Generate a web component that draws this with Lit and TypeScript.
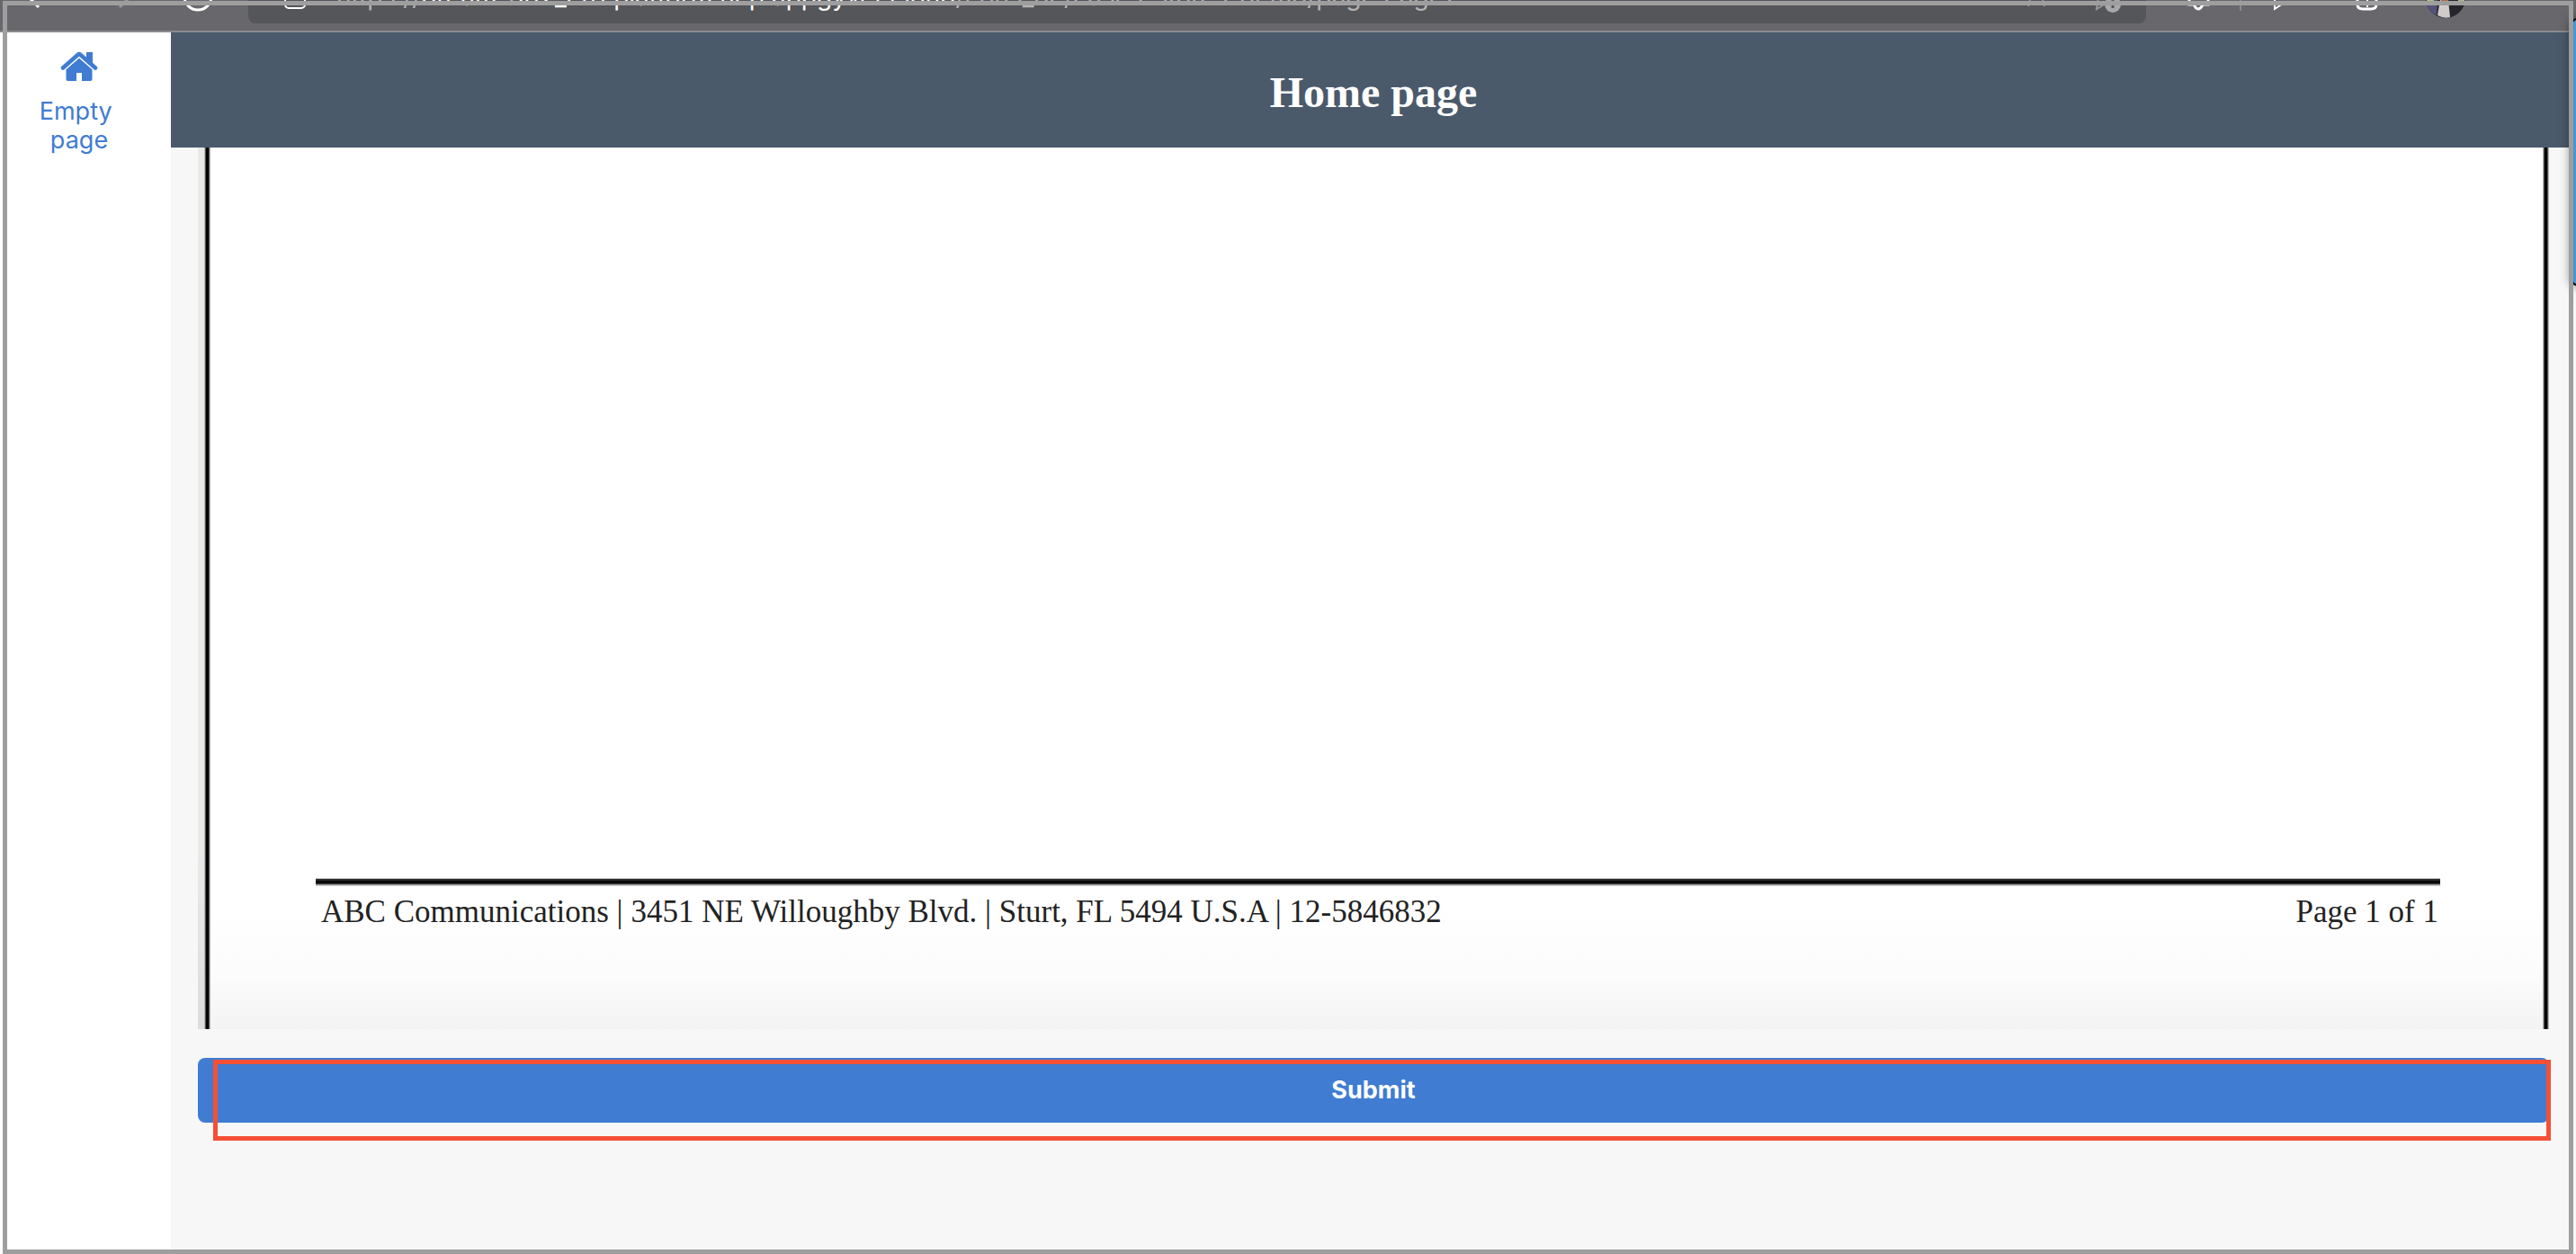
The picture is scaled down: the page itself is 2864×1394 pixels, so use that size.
import { LitElement, html, css } from "lit";
import { customElement, property } from "lit/decorators.js";

@customElement("browser-bar")
class BrowserBar extends LitElement {
  static styles = css`
    :host {
      display: block;
    }
    .bar {
      display: flex;
      align-items: flex-start;
      height: 34px;
      overflow: hidden;
      background: #67676c;
      border-bottom: 2px solid #8b8b8e;
    }
    svg {
      display: block;
      flex: none;
    }
    .nav {
      flex: none;
      width: 276px;
    }
    .address {
      display: flex;
      flex: 1;
      min-width: 0;
      height: 26px;
      overflow: hidden;
      border-radius: 0 0 8px 8px;
      background: #555659;
    }
    .lock {
      flex: none;
      width: 98px;
    }
    .url {
      flex: 1;
      margin-top: -20px;
      height: 34px;
      overflow: hidden;
      white-space: nowrap;
      font: 28px/32px Inter, "Liberation Sans", sans-serif;
      color: #b4b4b6;
    }
    .host {
      color: #fff;
    }
    .tools {
      flex: none;
      width: 478px;
    }
  `;

  render() {
    return html`
      <div class="bar">
        <svg class="nav" width="276" height="34" viewBox="0 0 276 34" fill="none" stroke="#fff" stroke-width="3">
          <path d="M43 8 L30 -5 L43 -18" />
          <path d="M133 8 L146 -5 L133 -18" stroke="#98989b" />
          <circle cx="220" cy="-4" r="15" />
        </svg>
        <div class="address">
          <svg class="lock" width="98" height="26" viewBox="0 0 98 26" fill="none" stroke="#fff" stroke-width="2">
            <rect x="41" y="-14" width="22" height="23" rx="4" />
          </svg>
          <div class="url">https://<span class="host">dream-502_eu1.platform.hcp.appgyver.cloud</span>/cons_de/cases-stores-demo/page.Page1</div>
          <svg width="146" height="26" viewBox="0 0 146 26" fill="none" stroke="#98989b" stroke-width="2">
            <path d="M15 7 L18 -4 M33 7 L30 -4" />
            <path d="M94 -10 L91 10 L103 3" />
            <circle cx="109" cy="5" r="9" fill="#a8a8aa" stroke="none" />
            <path d="M109 -1 V9" stroke="#555659" stroke-width="3" />
          </svg>
        </div>
        <svg class="tools" width="478" height="34" viewBox="0 0 478 34" fill="none" stroke="#fff" stroke-width="3">
          <path d="M48 -12 V5 H53 C54 5 54 10 58 10 C62 10 62 5 64 5 H69 V-12" />
          <path d="M105 0 V12" stroke="#8b8b8e" stroke-width="2" />
          <path d="M143 -12 V10 L155 2" stroke-width="2" />
          <path d="M235 -2 V5 Q235 10 241 10 H250 Q256 10 256 5 V-8" />
          <path d="M246 -4 V8" stroke-width="2" />
          <circle cx="333" cy="-2" r="22" fill="#26242d" stroke="none" />
          <path d="M312 0 Q312 12 323 17 L324 0 Z" fill="#55527a" stroke="none" />
          <path d="M327 0 L324 17 Q331 21 338 19 L336 0 Z" fill="#d2ccc9" stroke="none" />
          <path d="M312 0 H320 V3 H312 Z M347 0 H354 V3 H347 Z" fill="#a9bd83" stroke="none" />
          <path d="M328 0 H336 V4 H328 Z" fill="#b06b45" stroke="none" />
        </svg>
      </div>
    `;
  }
}

@customElement("side-nav")
class SideNav extends LitElement {
  static styles = css`
    :host {
      display: block;
      background: #fff;
    }
    .link {
      display: flex;
      flex-direction: column;
      align-items: center;
      gap: 16px;
      padding: 20px 14px 0 0;
      color: #3f7cd2;
      text-decoration: none;
      font: 27px/32px Inter, "Liberation Sans", sans-serif;
    }
    .label {
      white-space: pre;
      text-align: center;
    }
  `;

  render() {
    return html`
      <nav>
        <a class="link" href="#home">
          <svg width="42" height="36" viewBox="0 0 42 36" fill="#3f7cd2" aria-hidden="true">
            <path d="M3 19.500 L20 4.500 Q21 3.800 22 4.500 L39 19.500" fill="none" stroke="#3f7cd2" stroke-width="4.600" stroke-linecap="round" stroke-linejoin="round" />
            <path d="M29 2 H36 V15 L29 9 Z" />
            <path d="M21 8.500 L35.500 21 V32 Q35.500 34 33.500 34 H24 V25 H18 V34 H8.500 Q6.500 34 6.500 32 V21 Z" />
            <path d="M5 22 L21 8 L37 22" fill="none" stroke="#fff" stroke-width="1" />
          </svg>
          <span class="label">${"Empty \npage"}</span>
        </a>
      </nav>
    `;
  }
}

@customElement("document-page")
class DocumentPage extends LitElement {
  @property() company = "";
  @property() pages = "";

  static styles = css`
    :host {
      display: flex;
    }
    .strip {
      width: 7px;
      background: linear-gradient(#e9e9e7, #e9e9e7 80%, #dcdcdc);
    }
    .edge {
      width: 7px;
      background: linear-gradient(90deg, #b5b5b5 1px, #555 1px, #555 2px, #000 2px, #000 5px, #555 5px, #555 6px, #b5b5b5 6px);
    }
    .sheet {
      flex: 1;
      display: flex;
      flex-direction: column;
      justify-content: flex-end;
      padding: 0 114px 108px 117px;
      background: linear-gradient(to top, #f3f3f3, #fcfcfc 60px, #fff 140px);
    }
    .rule {
      height: 9px;
      background: linear-gradient(#ccc 1px, #333 1px, #222 3px, #000 4px, #000 5px, #444 7px, #888 7px, #ddd 9px);
    }
    .footer {
      display: flex;
      justify-content: space-between;
      padding: 7px 2px 0 6px;
      font: 35px/44px "Liberation Serif", serif;
      color: #222;
    }
  `;

  render() {
    return html`
      <div class="strip"></div>
      <div class="edge"></div>
      <div class="sheet">
        <div class="rule"></div>
        <div class="footer">
          <span>${this.company}</span>
          <span>${this.pages}</span>
        </div>
      </div>
      <div class="edge"></div>
    `;
  }
}

@customElement("app-root")
class AppRoot extends LitElement {
  static styles = css`
    :host {
      display: block;
    }
    .window {
      position: relative;
      display: flex;
      flex-direction: column;
      min-height: 100vh;
      overflow: hidden;
      background: #f7f7f7;
    }
    .body {
      flex: 1;
      display: grid;
      grid-template-columns: 190px 1fr;
    }
    .content {
      display: flex;
      flex-direction: column;
    }
    .header {
      display: flex;
      align-items: center;
      justify-content: center;
      height: 128px;
      background: #4a5a6b;
      color: #fff;
    }
    .title {
      margin: 0;
      padding-top: 6px;
      font: bold 48px/56px "Liberation Serif", serif;
    }
    .main {
      flex: 1;
      display: flex;
      flex-direction: column;
      gap: 32px;
      padding: 0 30px 146px 30px;
    }
    .document {
      flex: 1;
    }
    .action {
      position: relative;
      display: flex;
    }
    .submit {
      flex: 1;
      height: 72px;
      padding: 0;
      border: 0;
      border-radius: 8px;
      background: #3f7cd2;
      color: #fff;
      font: 700 27px/32px Inter, "Liberation Sans", sans-serif;
    }
    .highlight {
      position: absolute;
      inset: 2px -2px -20px 17px;
      border: 5px solid #f55036;
      pointer-events: none;
    }
    .tab {
      position: absolute;
      top: 20px;
      right: -22px;
      width: 24px;
      height: 294px;
      border: 2px solid #000;
      border-radius: 8px;
      background: #4795d1;
      box-shadow: 0 0 12px rgba(0, 0, 0, 0.5);
      box-sizing: content-box;
    }
    .frame {
      position: absolute;
      inset: 1px 3px 0 3px;
      border: 5px solid #9e9e9e;
      pointer-events: none;
    }
  `;

  render() {
    return html`
      <div class="window">
        <browser-bar></browser-bar>
        <div class="body">
          <side-nav></side-nav>
          <div class="content">
            <header class="header"><h1 class="title">Home page</h1></header>
            <main class="main">
              <document-page
                class="document"
                company="ABC Communications | 3451 NE Willoughby Blvd. | Sturt, FL 5494 U.S.A | 12-5846832"
                pages="Page 1 of 1"
              ></document-page>
              <div class="action">
                <button class="submit" type="button">Submit</button>
                <div class="highlight"></div>
              </div>
            </main>
          </div>
        </div>
        <div class="tab"></div>
        <div class="frame"></div>
      </div>
    `;
  }
}
